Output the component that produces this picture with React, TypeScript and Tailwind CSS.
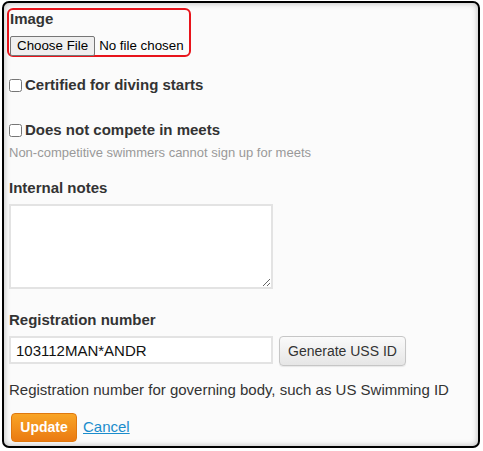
import React from "react";

const font = { fontFamily: '"Liberation Sans", Arial, sans-serif' };

export default function App() {
  return (
    <div className="w-[483px] h-[451px] bg-white pt-[1px] pl-[2px]" style={font}>
      <div className="w-[478px] h-[447px] border-2 border-black rounded-[7px] bg-[#fbfbfb] shadow-[inset_0_0_6px_rgba(0,0,0,0.28)] pt-[5px] pl-[3px] text-[#333]">
        {/* image upload field */}
        <div className="w-[184px] h-[49px] border-2 border-[#e8141b] rounded-[6px] pl-[1px]">
          <div className="h-[18px] leading-[18px] text-[15px] font-bold text-[#333]">Image</div>
          <div className="flex items-center mt-[8px] h-[20px] whitespace-nowrap">
            <button className="shrink-0 h-[20px] px-[6px] border border-[#767676] bg-[#efefef] rounded-[2px] text-[13.33px] leading-[18px] text-black">
              Choose File
            </button>
            <span className="ml-[4px] text-[13.33px] text-black">No file chosen</span>
          </div>
        </div>

        <div className="px-[2px]">
          <label className="flex items-center h-[20px] mt-[18px]">
            <input type="checkbox" className="m-0 w-[13px] h-[13px]" />
            <span className="ml-[3px] text-[15px] font-bold leading-[20px]">Certified for diving starts</span>
          </label>

          <label className="flex items-center h-[20px] mt-[25px]">
            <input type="checkbox" className="m-0 w-[13px] h-[13px]" />
            <span className="ml-[3px] text-[15px] font-bold leading-[20px]">Does not compete in meets</span>
          </label>
          <div className="mt-[4px] h-[18px] leading-[18px] text-[13px] text-[#999]">
            Non-competitive swimmers cannot sign up for meets
          </div>

          <div className="mt-[17px] h-[18px] leading-[18px] text-[15px] font-bold">Internal notes</div>
          <textarea className="block mt-[7px] w-[264px] h-[85px] border-2 border-[#e3e3e3] bg-white" />

          <div className="mt-[22px] h-[18px] leading-[18px] text-[15px] font-bold">Registration number</div>
          <div className="flex items-start mt-[7px]">
            <input
              type="text"
              defaultValue="103112MAN*ANDR"
              className="w-[264px] h-[28px] border-2 border-[#e3e3e3] bg-white px-[5px] text-[15px] text-[#111]"
            />
            <button className="ml-[6px] h-[30px] px-[8px] border border-[#c6c6c6] rounded-[4px] bg-gradient-to-b from-[#fafafa] to-[#e6e6e6] text-[14px] text-[#333] shadow-[0_1px_1px_rgba(0,0,0,0.08)]">
              Generate USS ID
            </button>
          </div>

          <div className="mt-[15px] h-[18px] leading-[18px] text-[15px] text-[#333]">
            Registration number for governing body, such as US Swimming ID
          </div>

          <div className="flex items-center mt-[14px]">
            <button className="ml-[2px] w-[66px] h-[29px] rounded-[4px] border border-[#e0780f] bg-gradient-to-b from-[#f9a526] to-[#ea7a12] text-white font-bold text-[14px]">
              Update
            </button>
            <a href="#" className="ml-[6px] text-[15px] text-[#1a8ccc] underline">Cancel</a>
          </div>
        </div>
      </div>
    </div>
  );
}
